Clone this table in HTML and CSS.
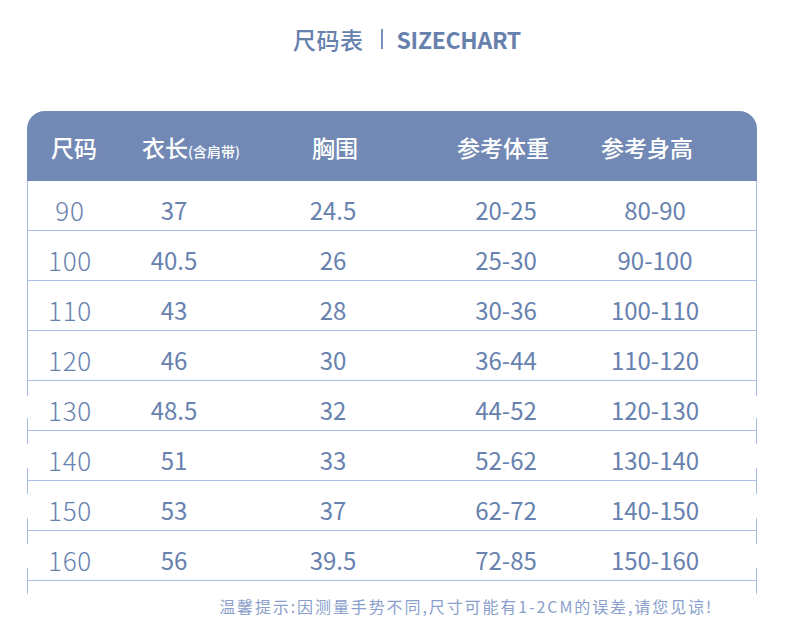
FILE: index.html
```html
<!DOCTYPE html>
<html lang="zh-CN">
<head>
<meta charset="utf-8">
<title>尺码表</title>
<link rel="stylesheet" href="styles.css">
</head>
<body>
<div class="page">
  <h1 class="title"><span class="title-cn">尺码表</span><span class="title-sep"></span><span class="title-en">SIZECHART</span></h1>
  <div class="chart">
    <div class="head">
      <div class="hc">尺码</div>
      <div class="hc">衣长<small>(含肩带)</small></div>
      <div class="hc">胸围</div>
      <div class="hc">参考体重</div>
      <div class="hc">参考身高</div>
    </div>
    <div class="row"><div class="size">90</div><div>37</div><div>24.5</div><div>20-25</div><div>80-90</div></div>
    <div class="row"><div class="size">100</div><div>40.5</div><div>26</div><div>25-30</div><div>90-100</div></div>
    <div class="row"><div class="size">110</div><div>43</div><div>28</div><div>30-36</div><div>100-110</div></div>
    <div class="row"><div class="size">120</div><div>46</div><div>30</div><div>36-44</div><div>110-120</div></div>
    <div class="row cut first-cut"><div class="size">130</div><div>48.5</div><div>32</div><div>44-52</div><div>120-130</div></div>
    <div class="row cut"><div class="size">140</div><div>51</div><div>33</div><div>52-62</div><div>130-140</div></div>
    <div class="row cut"><div class="size">150</div><div>53</div><div>37</div><div>62-72</div><div>140-150</div></div>
    <div class="row cut"><div class="size">160</div><div>56</div><div>39.5</div><div>72-85</div><div>150-160</div></div>
  </div>
  <p class="note">温馨提示:因测量手势不同,尺寸可能有1-2CM的误差,请您见谅!</p>
</div>
</body>
</html>
```

FILE: styles.css
```css
html, body {
  margin: 0;
  padding: 0;
  background: #ffffff;
}

body {
  font-family: "Noto Sans CJK SC", "Noto Sans", sans-serif;
  color: #6882af;
}

.page {
  width: 790px;
  height: 636px;
  padding-left: 27px;
  box-sizing: border-box;
  overflow: hidden;
}

.title {
  margin: 0;
  width: 730px;
  height: 78px;
  padding-left: 30px;
  box-sizing: border-box;
  display: flex;
  align-items: center;
  justify-content: center;
  font-weight: 400;
  color: #6781ad;
}

.title-cn {
  font-size: 23px;
  font-weight: 500;
  letter-spacing: 0.5px;
}

.title-sep {
  width: 2px;
  height: 20px;
  background: #7890bb;
  margin: 0 14px 0 17px;
}

.title-en {
  font-size: 23px;
  font-weight: 700;
  letter-spacing: -0.3px;
}

.chart {
  margin-top: 33px;
  width: 730px;
}

.head {
  height: 70px;
  background: #7189b4;
  border-radius: 18px 18px 0 0;
  display: grid;
  grid-template-columns: 94px 140px 148px 188px 100px 1fr;
  align-items: center;
  color: #ffffff;
  font-size: 23px;
  font-weight: 500;
  padding-top: 2px;
  box-sizing: border-box;
}

.hc {
  text-align: center;
  white-space: nowrap;
}

.hc small {
  font-size: 14px;
}

.row {
  --line: #a9bee6;
  height: 50px;
  box-sizing: border-box;
  border-bottom: 1px solid var(--line);
  display: grid;
  grid-template-columns: 86px 122px 196px 150px 148px 1fr;
  align-items: center;
  padding-top: 7px;
  font-size: 24px;
  text-align: center;
  background-image: linear-gradient(var(--line), var(--line)), linear-gradient(var(--line), var(--line));
  background-size: 1px 100%;
  background-position: left top, right top;
  background-repeat: no-repeat;
}

.row.cut {
  background-image:
    linear-gradient(to bottom, var(--line) 0, var(--line) 13px, transparent 13px, transparent calc(100% - 12px), var(--line) calc(100% - 12px)),
    linear-gradient(to bottom, var(--line) 0, var(--line) 13px, transparent 13px, transparent calc(100% - 12px), var(--line) calc(100% - 12px));
}

.row.first-cut {
  background-image:
    linear-gradient(to bottom, var(--line) 0, var(--line) 15px, transparent 15px, transparent calc(100% - 12px), var(--line) calc(100% - 12px)),
    linear-gradient(to bottom, var(--line) 0, var(--line) 15px, transparent 15px, transparent calc(100% - 12px), var(--line) calc(100% - 12px));
}

.chart::after {
  content: "";
  display: block;
  height: 13px;
  background-image: linear-gradient(#a9bee6, #a9bee6), linear-gradient(#a9bee6, #a9bee6);
  background-size: 1px 100%;
  background-position: left top, right top;
  background-repeat: no-repeat;
}

.size {
  font-size: 26px;
  font-weight: 300;
  letter-spacing: 0.8px;
}

.note {
  margin: 0;
  width: 730px;
  text-align: right;
  padding-right: 44px;
  box-sizing: border-box;
  font-size: 16px;
  font-weight: 400;
  letter-spacing: 1.9px;
  color: #8a9fcb;
}
```
